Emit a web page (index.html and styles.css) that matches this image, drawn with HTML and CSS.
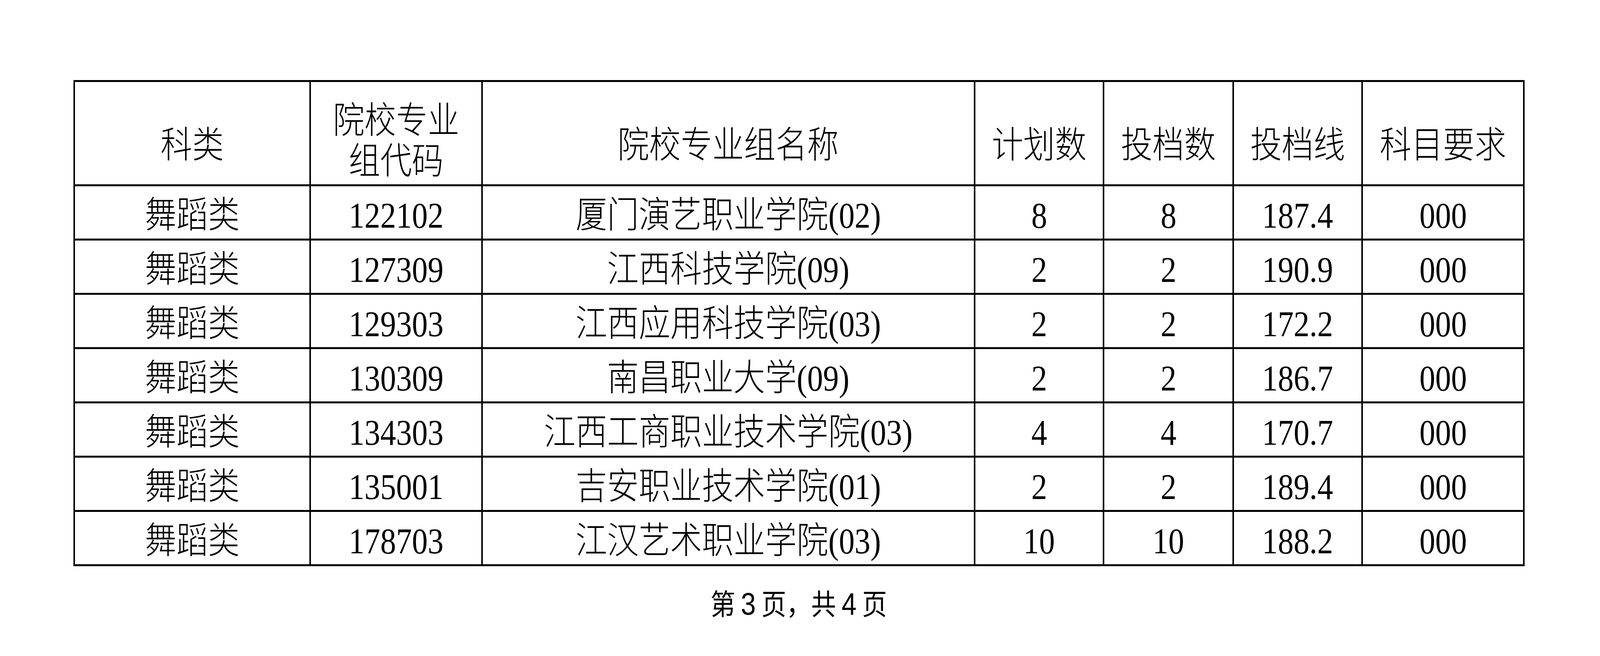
FILE: index.html
```html
<!DOCTYPE html>
<html lang="zh-CN">
<head>
<meta charset="utf-8">
<title>投档表 第3页</title>
<link rel="stylesheet" href="styles.css">
</head>
<body>
<div class="page">
  <table class="grid">
    <colgroup>
      <col class="c1"><col class="c2"><col class="c3"><col class="c4"><col class="c5"><col class="c6"><col class="c7">
    </colgroup>
    <thead>
      <tr class="head">
        <th><span class="t">科类</span></th>
        <th class="two"><span class="t">院校专业<br>组代码</span></th>
        <th><span class="t">院校专业组名称</span></th>
        <th><span class="t">计划数</span></th>
        <th><span class="t">投档数</span></th>
        <th><span class="t">投档线</span></th>
        <th><span class="t">科目要求</span></th>
      </tr>
    </thead>
    <tbody>
      <tr><td><span class="t">舞蹈类</span></td><td><span class="t">122102</span></td><td><span class="t">厦门演艺职业学院(02)</span></td><td><span class="t">8</span></td><td><span class="t">8</span></td><td><span class="t">187.4</span></td><td><span class="t">000</span></td></tr>
      <tr><td><span class="t">舞蹈类</span></td><td><span class="t">127309</span></td><td><span class="t">江西科技学院(09)</span></td><td><span class="t">2</span></td><td><span class="t">2</span></td><td><span class="t">190.9</span></td><td><span class="t">000</span></td></tr>
      <tr><td><span class="t">舞蹈类</span></td><td><span class="t">129303</span></td><td><span class="t">江西应用科技学院(03)</span></td><td><span class="t">2</span></td><td><span class="t">2</span></td><td><span class="t">172.2</span></td><td><span class="t">000</span></td></tr>
      <tr><td><span class="t">舞蹈类</span></td><td><span class="t">130309</span></td><td><span class="t">南昌职业大学(09)</span></td><td><span class="t">2</span></td><td><span class="t">2</span></td><td><span class="t">186.7</span></td><td><span class="t">000</span></td></tr>
      <tr><td><span class="t">舞蹈类</span></td><td><span class="t">134303</span></td><td><span class="t">江西工商职业技术学院(03)</span></td><td><span class="t">4</span></td><td><span class="t">4</span></td><td><span class="t">170.7</span></td><td><span class="t">000</span></td></tr>
      <tr><td><span class="t">舞蹈类</span></td><td><span class="t">135001</span></td><td><span class="t">吉安职业技术学院(01)</span></td><td><span class="t">2</span></td><td><span class="t">2</span></td><td><span class="t">189.4</span></td><td><span class="t">000</span></td></tr>
      <tr><td><span class="t">舞蹈类</span></td><td><span class="t">178703</span></td><td><span class="t">江汉艺术职业学院(03)</span></td><td><span class="t">10</span></td><td><span class="t">10</span></td><td><span class="t">188.2</span></td><td><span class="t">000</span></td></tr>
    </tbody>
  </table>
  <p class="footer"><span class="t">第 <span class="num">3</span> 页，共 <span class="num">4</span> 页</span></p>
</div>
</body>
</html>
```

FILE: styles.css
```css
html, body {
  margin: 0;
  padding: 0;
  background: #ffffff;
}

.page {
  padding: 205px 0 0 188px;
}

.grid {
  border-collapse: collapse;
  table-layout: fixed;
  width: 3711px;
  font-family: "Liberation Serif", "Noto Sans CJK SC", serif;
  font-size: 94px;
  font-weight: 300;
  color: #000000;
  border-style: solid;
  border-color: #000000;
  border-width: 5px 4px;
}

.c1 { width: 604px; }
.c2 { width: 440px; }
.c3 { width: 1261px; }
.c4 { width: 330px; }
.c5 { width: 332px; }
.c6 { width: 330px; }
.c7 { width: 414px; }

.grid th,
.grid td {
  box-sizing: border-box;
  border-style: solid;
  border-color: #000000;
  border-width: 5px 4px;
  padding: 0;
  text-align: center;
  vertical-align: middle;
  font-weight: 300;
  line-height: 1.2;
  white-space: nowrap;
}

/* glyphs in the source are horizontally condensed */
.t {
  display: inline-block;
  transform: scaleX(0.8605);
  transform-origin: 50% 50%;
}

.grid .head th {
  height: 267px;
  padding-top: 62px;
}

.grid .head th.two {
  padding-top: 44px;
}

.grid .head th.two .t {
  line-height: 104px;
}

.grid tbody td {
  height: 139px;
  padding-top: 14px;
}

.footer {
  margin: 48px 0 0 0;
  width: 3714px;
  text-align: center;
  font-family: "Noto Sans CJK SC", sans-serif;
  font-size: 74px;
  line-height: 1.2;
  color: #000000;
}

.footer .num {
  font-family: "Liberation Sans", sans-serif;
  font-size: 80px;
}
```
